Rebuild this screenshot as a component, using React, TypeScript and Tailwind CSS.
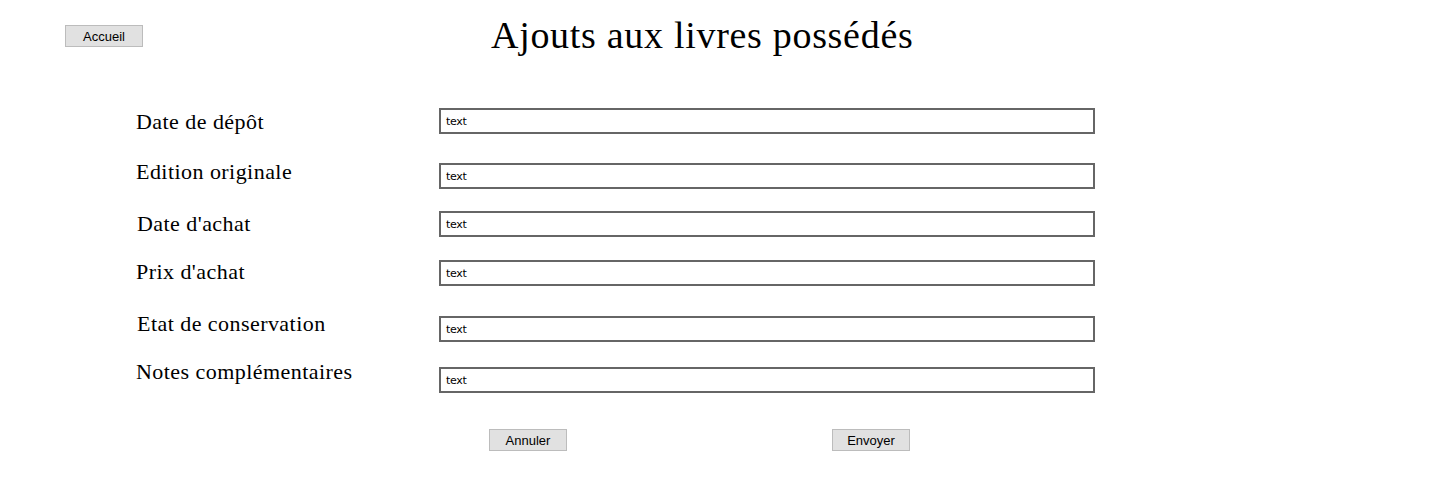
import React from "react";

const fields = [
	{ label: "Date de dépôt", row: "h-[52px]", labelPad: "mt-[2px] pl-[136px]", inputPad: "mt-0" },
	{ label: "Edition originale", row: "h-[51px]", labelPad: "mt-0 pl-[136px]", inputPad: "mt-[3px]" },
	{ label: "Date d'achat", row: "h-[49px]", labelPad: "mt-[1px] pl-[137px]", inputPad: "mt-0" },
	{ label: "Prix d'achat", row: "h-[52px]", labelPad: "mt-0 pl-[136px]", inputPad: "mt-0" },
	{ label: "Etat de conservation", row: "h-[48px]", labelPad: "mt-0 pl-[137px]", inputPad: "mt-[4px]" },
	{ label: "Notes complémentaires", row: "h-[33px]", labelPad: "mt-0 pl-[136px]", inputPad: "mt-[7px]" },
];

function GreyButton({ children }: { children: React.ReactNode }) {
	return (
		<button className="block w-[78px] h-[22px] bg-[#e1e1e1] border border-[#bcbcbc] text-[13px] leading-none text-black font-['Liberation_Sans',Arial,sans-serif]">
			{children}
		</button>
	);
}

export default function App() {
	return (
		<div className="w-[1433px] h-[494px] bg-white overflow-hidden font-['Liberation_Serif','Times_New_Roman',serif] text-black">
			{/* header */}
			<div className="flex items-start h-[108px]">
				<div className="flex ml-[65px] mt-[25px]">
					<GreyButton>Accueil</GreyButton>
				</div>
				<h1 className="ml-[348px] mt-[16px] text-[38px] leading-none tracking-[0.7px] whitespace-nowrap">
					Ajouts aux livres possédés
				</h1>
			</div>

			{/* form */}
			<div className="flex flex-col">
				{fields.map((f) => (
					<div key={f.label} className={`flex items-start ${f.row}`}>
						<div className={`w-[439px] text-[22px] leading-[24px] tracking-[0.45px] whitespace-nowrap ${f.labelPad}`}>
							{f.label}
						</div>
						<div
							className={`w-[656px] h-[26px] border-2 border-[#666666] flex items-center pl-[5px] ${f.inputPad}`}
						>
							<span className="text-[11px] leading-none font-['DejaVu_Sans',sans-serif] tracking-[-0.3px]">
								text
							</span>
						</div>
					</div>
				))}
			</div>

			{/* actions */}
			<div className="flex mt-[36px]">
				<div className="flex ml-[489px]">
					<GreyButton>Annuler</GreyButton>
				</div>
				<div className="flex ml-[265px]">
					<GreyButton>Envoyer</GreyButton>
				</div>
			</div>
		</div>
	);
}
